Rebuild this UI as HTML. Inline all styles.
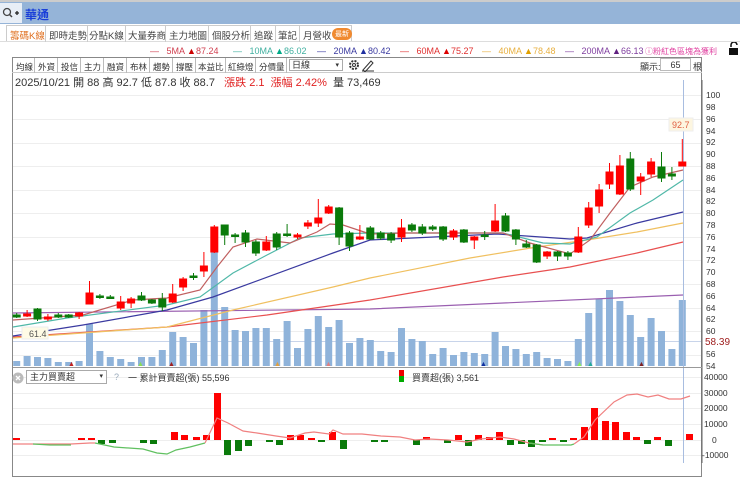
<!DOCTYPE html><html><head><meta charset="utf-8"><style>
*{margin:0;padding:0;box-sizing:border-box}
body{width:740px;height:463px;overflow:hidden;background:#fff;font-family:"Liberation Sans","Noto Sans CJK TC",sans-serif;position:relative;font-size:10px;color:#333}
.a{position:absolute;white-space:nowrap}
</style></head><body>
<div class="a" style="left:0;top:0;width:740px;height:2px;background:#ccc"></div>
<div class="a" style="left:0;top:2px;width:740px;height:22px;background:#95b4d8"></div>
<div class="a" style="left:0;top:3px;width:22px;height:20px;background:#e8eef6"></div>
<svg class="a" style="left:2px;top:7px" width="18" height="12"><circle cx="5" cy="5" r="3.5" fill="none" stroke="#444" stroke-width="1.3"/><line x1="7.5" y1="7.5" x2="10" y2="10" stroke="#444" stroke-width="1.5"/><path d="M13 6h4M15 4v4" stroke="#222" stroke-width="1.3"/></svg>
<div class="a" style="left:25px;top:6px;font-size:12px;font-weight:bold;color:#1a3fd8">華通</div>
<div class="a" style="left:0;top:24px;width:740px;height:18px;background:#fff;border-bottom:1px solid #ddd"></div>
<div class="a" style="left:6px;top:25px;width:346px;height:16px;border:1px solid #ccc;border-bottom:none"></div>
<div class="a" style="top:28px;font-size:9.5px;left:0;color:#444">
<span class="a" style="left:10px;color:#e07020">籌碼K線</span>
<span class="a" style="left:49px">即時走勢</span><span class="a" style="left:89px">分點K線</span><span class="a" style="left:128px">大量券商</span><span class="a" style="left:169px">主力地圖</span><span class="a" style="left:212px">個股分析</span><span class="a" style="left:254px">追蹤</span><span class="a" style="left:278px">筆記</span><span class="a" style="left:303px">月營收</span>
<span class="a" style="left:332px;top:0;background:#f08a30;color:#fff;border-radius:6px;font-size:7px;padding:1px 3px">最新</span></div>
<svg class="a" style="left:0;top:25px" width="360" height="17"><g stroke="#ccc"><line x1="45.5" y1="0" x2="45.5" y2="17"/><line x1="87.5" y1="0" x2="87.5" y2="17"/><line x1="125.5" y1="0" x2="125.5" y2="17"/><line x1="165.5" y1="0" x2="165.5" y2="17"/><line x1="208.5" y1="0" x2="208.5" y2="17"/><line x1="250.5" y1="0" x2="250.5" y2="17"/><line x1="275.5" y1="0" x2="275.5" y2="17"/><line x1="299.5" y1="0" x2="299.5" y2="17"/></g></svg>
<div class="a" style="top:46px;left:0;font-size:9px">
<span class="a" style="left:150px;color:#d04050">—&nbsp;&nbsp;&nbsp;5MA <span style="color:#c00">▲</span>87.24</span>
<span class="a" style="left:233px;color:#40b0a0">—&nbsp;&nbsp;&nbsp;10MA <span style="color:#0a8">▲</span>86.02</span>
<span class="a" style="left:317px;color:#3a3aa0">—&nbsp;&nbsp;&nbsp;20MA <span style="color:#2030a0">▲</span>80.42</span>
<span class="a" style="left:400px;color:#e03030">—&nbsp;&nbsp;&nbsp;60MA <span style="color:#d00">▲</span>75.27</span>
<span class="a" style="left:482px;color:#e8b040">—&nbsp;&nbsp;&nbsp;40MA <span style="color:#e0a000">▲</span>78.48</span>
<span class="a" style="left:565px;color:#8040a0">—&nbsp;&nbsp;&nbsp;200MA <span style="color:#602080">▲</span>66.13</span>
<span class="a" style="left:645px;color:#e040a0;font-size:8px">ⓘ粉紅色區塊為獲利</span></div>
<svg class="a" style="left:728px;top:42px" width="12" height="14"><path d="M3 5V3a3 3 0 0 1 6 0" fill="none" stroke="#111" stroke-width="1.5"/><rect x="1" y="6" width="9" height="7" fill="#111"/></svg>
<div class="a" style="left:12px;top:57px;width:690px;height:420px;border:1px solid #888"></div>
<div class="a" style="left:12px;top:57px;width:690px;height:16px;border-bottom:1px solid #ccc"></div>
<div class="a" style="left:0;top:61px;font-size:8.5px;color:#333">
<span class="a" style="left:16px">均線</span><span class="a" style="left:38px">外資</span><span class="a" style="left:61px">投信</span><span class="a" style="left:84px">主力</span><span class="a" style="left:107px">融資</span><span class="a" style="left:130px">布林</span><span class="a" style="left:153px">趨勢</span><span class="a" style="left:176px">撐壓</span><span class="a" style="left:198px">本益比</span><span class="a" style="left:228px">紅綠燈</span><span class="a" style="left:259px">分價量</span></div>
<svg class="a" style="left:13px;top:58px" width="290" height="15"><g stroke="#bbb"><line x1="21.5" y1="0" x2="21.5" y2="15"/><line x1="44.5" y1="0" x2="44.5" y2="15"/><line x1="67.5" y1="0" x2="67.5" y2="15"/><line x1="90.5" y1="0" x2="90.5" y2="15"/><line x1="113.5" y1="0" x2="113.5" y2="15"/><line x1="136.5" y1="0" x2="136.5" y2="15"/><line x1="159.5" y1="0" x2="159.5" y2="15"/><line x1="182.5" y1="0" x2="182.5" y2="15"/><line x1="212.5" y1="0" x2="212.5" y2="15"/><line x1="242.5" y1="0" x2="242.5" y2="15"/><line x1="273.5" y1="0" x2="273.5" y2="15"/></g></svg>
<div class="a" style="left:289px;top:59px;width:54px;height:12px;border:1px solid #aaa;font-size:9px;padding-left:2px;line-height:11px">日線<span style="position:absolute;right:3px;font-size:7px">▾</span></div>
<svg class="a" style="left:347px;top:58px" width="30" height="14"><circle cx="7" cy="7" r="4" fill="none" stroke="#333" stroke-width="2" stroke-dasharray="2 1.2"/><circle cx="7" cy="7" r="1.5" fill="none" stroke="#333"/><path d="M16 12l8-9 2 2-8 9z" fill="none" stroke="#333"/><line x1="15" y1="13" x2="27" y2="13" stroke="#333"/></svg>
<div class="a" style="left:640px;top:60px;font-size:9px">顯示:</div>
<div class="a" style="left:660px;top:58px;width:31px;height:13px;border:1px solid #bbb;font-size:9px;text-align:center;line-height:12px">65</div>
<div class="a" style="left:693px;top:60px;font-size:9px">根</div>
<div class="a" style="left:15px;top:74px;font-size:11px;color:#333">2025/10/21 開 88 高 92.7 低 87.8 收 88.7 &nbsp;&nbsp;<span style="color:#e02020">漲跌 2.1 &nbsp;漲幅 2.42%</span> &nbsp;量 73,469</div>
<svg class="a" style="left:0;top:0" width="740" height="463">
<g stroke="#eee" stroke-width="1">
<line x1="13" y1="95.5" x2="701" y2="95.5"/><line x1="13" y1="119.5" x2="701" y2="119.5"/><line x1="13" y1="143.5" x2="701" y2="143.5"/><line x1="13" y1="166.5" x2="701" y2="166.5"/><line x1="13" y1="190.5" x2="701" y2="190.5"/><line x1="13" y1="213.5" x2="701" y2="213.5"/><line x1="13" y1="237.5" x2="701" y2="237.5"/><line x1="13" y1="260.5" x2="701" y2="260.5"/><line x1="13" y1="284.5" x2="701" y2="284.5"/><line x1="13" y1="308.5" x2="701" y2="308.5"/><line x1="13" y1="331.5" x2="701" y2="331.5"/><line x1="13" y1="355.5" x2="701" y2="355.5"/>
<line x1="13" y1="377.5" x2="701" y2="377.5"/><line x1="13" y1="393.5" x2="701" y2="393.5"/><line x1="13" y1="408.5" x2="701" y2="408.5"/><line x1="13" y1="424.5" x2="701" y2="424.5"/><line x1="13" y1="440.5" x2="701" y2="440.5"/><line x1="13" y1="455.5" x2="701" y2="455.5"/>
</g>
<line x1="13" y1="341.5" x2="701" y2="341.5" stroke="#c8d4ea"/>
<g fill="#8fb3da">
<rect x="13.2" y="361" width="7" height="5"/><rect x="23.6" y="356" width="7" height="10"/><rect x="34" y="357" width="7" height="9"/><rect x="44.4" y="358" width="7" height="8"/><rect x="54.8" y="362" width="7" height="4"/><rect x="65.2" y="362" width="7" height="4"/><rect x="75.6" y="361" width="7" height="5"/><rect x="86" y="324" width="7" height="42"/><rect x="96.4" y="351" width="7" height="15"/><rect x="106.8" y="357" width="7" height="9"/><rect x="117.2" y="359" width="7" height="7"/><rect x="127.6" y="362" width="7" height="4"/><rect x="138" y="357" width="7" height="9"/><rect x="148.4" y="357" width="7" height="9"/><rect x="158.8" y="350" width="7" height="16"/><rect x="169.2" y="332" width="7" height="34"/><rect x="179.6" y="337" width="7" height="29"/><rect x="190" y="343" width="7" height="23"/><rect x="200.4" y="310" width="7" height="56"/><rect x="210.8" y="252" width="7" height="114"/><rect x="221.2" y="307" width="7" height="59"/><rect x="231.6" y="330" width="7" height="36"/><rect x="242" y="331" width="7" height="35"/><rect x="252.4" y="328" width="7" height="38"/><rect x="262.8" y="328" width="7" height="38"/><rect x="273.2" y="339" width="7" height="27"/><rect x="283.6" y="321" width="7" height="45"/><rect x="294" y="348" width="7" height="18"/><rect x="304.4" y="329" width="7" height="37"/><rect x="314.8" y="316" width="7" height="50"/><rect x="325.2" y="327" width="7" height="39"/><rect x="335.6" y="320" width="7" height="46"/><rect x="346" y="343" width="7" height="23"/><rect x="356.4" y="338" width="7" height="28"/><rect x="366.8" y="340" width="7" height="26"/><rect x="377.2" y="351" width="7" height="15"/><rect x="387.6" y="352" width="7" height="14"/><rect x="398" y="328" width="7" height="38"/><rect x="408.4" y="339" width="7" height="27"/><rect x="418.8" y="341" width="7" height="25"/><rect x="429.2" y="354" width="7" height="12"/><rect x="439.6" y="348" width="7" height="18"/><rect x="450" y="355" width="7" height="11"/><rect x="460.4" y="352" width="7" height="14"/><rect x="470.8" y="353" width="7" height="13"/><rect x="481.2" y="354" width="7" height="12"/><rect x="491.6" y="332" width="7" height="34"/><rect x="502" y="346" width="7" height="20"/><rect x="512.4" y="349" width="7" height="17"/><rect x="522.8" y="354" width="7" height="12"/><rect x="533.2" y="352" width="7" height="14"/><rect x="543.6" y="358" width="7" height="8"/><rect x="554" y="359" width="7" height="7"/><rect x="564.4" y="361" width="7" height="5"/><rect x="574.8" y="339" width="7" height="27"/><rect x="585.2" y="313" width="7" height="53"/><rect x="595.6" y="299" width="7" height="67"/><rect x="606" y="290" width="7" height="76"/><rect x="616.4" y="301" width="7" height="65"/><rect x="626.8" y="315" width="7" height="51"/><rect x="637.2" y="337" width="7" height="29"/><rect x="647.6" y="318" width="7" height="48"/><rect x="658" y="331" width="7" height="35"/><rect x="668.4" y="349" width="7" height="17"/><rect x="678.8" y="300" width="7" height="66"/>
</g>
<g font-size="7"><text x="68" y="366" fill="#c02020">▲</text><text x="137" y="366" fill="#8d5">▲</text><text x="168" y="366" fill="#a02020">▲</text><text x="274" y="366" fill="#e0a040">▲</text><text x="325" y="366" fill="#e08080">▲</text><text x="480" y="366" fill="#1030a0">▲</text><text x="576" y="366" fill="#8e5">▲</text><text x="587" y="366" fill="#2a9">▲</text><text x="638" y="366" fill="#802020">▲</text></g>
<line x1="683.5" y1="80" x2="683.5" y2="463" stroke="#a8bde0"/>
<g fill="none" stroke-width="1.2">
<polyline stroke="#9a5fb0" points="13,313 370,309 683,295"/>
<polyline stroke="#e85050" points="13,337 167,327 267,315 370,300 503,277 570,267 637,253 683,242"/>
<polyline stroke="#f0c060" points="13,338 167,327 233,310 333,287 370,278 470,258 537,247 587,240 637,232 683,223"/>
<polyline stroke="#3a3aa0" points="13,336 83,325 167,310 213,297 333,253 370,240 497,234 570,239 587,238 637,223 683,212"/>
<polyline stroke="#50b8a8" points="13,327 67,318 167,305 200,297 233,273 267,255 300,238 333,234 370,233 437,233 503,233 543,243 570,244 597,237 630,213 653,200 683,180"/>
<polyline stroke="#c06060" points="13,320 83,315 133,300 167,298 200,290 217,267 233,247 257,239 290,243 317,232 330,224 343,225 370,234 403,233 470,233 503,233 530,243 570,254 590,240 610,213 630,187 653,177 683,170"/>
</g>
<g stroke-width="1">
<g stroke="#0a7a0a" fill="#0a7a0a">
<line x1="16.7" y1="313" x2="16.7" y2="318"/><rect x="13.2" y="315" width="7" height="2"/>
<line x1="37.5" y1="308" x2="37.5" y2="321"/><rect x="34" y="309" width="7" height="10"/>
<line x1="58.3" y1="313" x2="58.3" y2="318"/><rect x="54.8" y="315" width="7" height="2"/>
<line x1="68.7" y1="314" x2="68.7" y2="318"/><rect x="65.2" y="315" width="7" height="2"/>
<line x1="99.9" y1="294" x2="99.9" y2="299"/><rect x="96.4" y="296" width="7" height="1.5"/>
<line x1="110.3" y1="295" x2="110.3" y2="299"/><rect x="106.8" y="297" width="7" height="1.5"/>
<line x1="141.5" y1="292" x2="141.5" y2="301"/><rect x="138" y="296" width="7" height="4"/>
<line x1="151.9" y1="299" x2="151.9" y2="304"/><rect x="148.4" y="300" width="7" height="3"/>
<line x1="162.3" y1="293" x2="162.3" y2="311"/><rect x="158.8" y="299" width="7" height="8"/>
<line x1="193.5" y1="273" x2="193.5" y2="280"/><rect x="190" y="276" width="7" height="1.5"/>
<line x1="224.7" y1="225" x2="224.7" y2="245"/><rect x="221.2" y="225" width="7" height="10"/>
<line x1="235.1" y1="233" x2="235.1" y2="243"/><rect x="231.6" y="235" width="7" height="1.5"/>
<line x1="245.5" y1="230" x2="245.5" y2="247"/><rect x="242" y="233" width="7" height="9"/>
<line x1="255.9" y1="240" x2="255.9" y2="256"/><rect x="252.4" y="242" width="7" height="11"/>
<line x1="276.7" y1="232" x2="276.7" y2="250"/><rect x="273.2" y="234" width="7" height="13"/>
<line x1="287.1" y1="224" x2="287.1" y2="237"/><rect x="283.6" y="234" width="7" height="1.5"/>
<line x1="339.1" y1="207" x2="339.1" y2="245"/><rect x="335.6" y="208" width="7" height="29"/>
<line x1="349.5" y1="231" x2="349.5" y2="251"/><rect x="346" y="233" width="7" height="13"/>
<line x1="370.3" y1="226" x2="370.3" y2="240"/><rect x="366.8" y="228" width="7" height="11"/>
<line x1="380.7" y1="231" x2="380.7" y2="240"/><rect x="377.2" y="233" width="7" height="5"/>
<line x1="391.1" y1="232" x2="391.1" y2="243"/><rect x="387.6" y="234" width="7" height="6"/>
<line x1="411.9" y1="223" x2="411.9" y2="232"/><rect x="408.4" y="225" width="7" height="5"/>
<line x1="422.3" y1="224" x2="422.3" y2="235"/><rect x="418.8" y="227" width="7" height="6"/>
<line x1="432.7" y1="225" x2="432.7" y2="231"/><rect x="429.2" y="227" width="7" height="2"/>
<line x1="443.1" y1="226" x2="443.1" y2="241"/><rect x="439.6" y="227" width="7" height="12"/>
<line x1="463.9" y1="229" x2="463.9" y2="243"/><rect x="460.4" y="230" width="7" height="12"/>
<line x1="484.7" y1="231" x2="484.7" y2="240"/><rect x="481.2" y="235" width="7" height="1.5"/>
<line x1="505.5" y1="213" x2="505.5" y2="232"/><rect x="502" y="216" width="7" height="15"/>
<line x1="515.9" y1="229" x2="515.9" y2="245"/><rect x="512.4" y="230" width="7" height="9"/>
<line x1="526.3" y1="240" x2="526.3" y2="248"/><rect x="522.8" y="244" width="7" height="3"/>
<line x1="536.7" y1="244" x2="536.7" y2="263"/><rect x="533.2" y="245" width="7" height="17"/>
<line x1="557.5" y1="251" x2="557.5" y2="261"/><rect x="554" y="252" width="7" height="4"/>
<line x1="567.9" y1="251" x2="567.9" y2="260"/><rect x="564.4" y="253" width="7" height="3"/>
<line x1="630.3" y1="152" x2="630.3" y2="191"/><rect x="626.8" y="159" width="7" height="30"/>
<line x1="661.5" y1="152" x2="661.5" y2="182"/><rect x="658" y="167" width="7" height="11"/>
<line x1="671.9" y1="167" x2="671.9" y2="180"/><rect x="668.4" y="174" width="7" height="2"/>
</g>
<g stroke="#f00" fill="#f00">
<line x1="27.1" y1="310" x2="27.1" y2="317"/><rect x="23.6" y="314" width="7" height="2"/>
<line x1="47.9" y1="314" x2="47.9" y2="321"/><rect x="44.4" y="317" width="7" height="2"/>
<line x1="79.1" y1="312" x2="79.1" y2="319"/><rect x="75.6" y="313" width="7" height="3"/>
<line x1="89.5" y1="281" x2="89.5" y2="304"/><rect x="86" y="293" width="7" height="11"/>
<line x1="120.7" y1="296" x2="120.7" y2="310"/><rect x="117.2" y="302" width="7" height="6"/>
<line x1="131.1" y1="297" x2="131.1" y2="308"/><rect x="127.6" y="299" width="7" height="4"/>
<line x1="172.7" y1="284" x2="172.7" y2="303"/><rect x="169.2" y="294" width="7" height="8"/>
<line x1="183.1" y1="277" x2="183.1" y2="291"/><rect x="179.6" y="279" width="7" height="8"/>
<line x1="203.9" y1="252" x2="203.9" y2="277"/><rect x="200.4" y="266" width="7" height="5"/>
<line x1="214.3" y1="225" x2="214.3" y2="253"/><rect x="210.8" y="227" width="7" height="25"/>
<line x1="266.3" y1="236" x2="266.3" y2="251"/><rect x="262.8" y="242" width="7" height="8"/>
<line x1="297.5" y1="233" x2="297.5" y2="239"/><rect x="294" y="235" width="7" height="2"/>
<line x1="307.9" y1="220" x2="307.9" y2="229"/><rect x="304.4" y="223" width="7" height="3"/>
<line x1="318.3" y1="199" x2="318.3" y2="227"/><rect x="314.8" y="218" width="7" height="5"/>
<line x1="328.7" y1="205" x2="328.7" y2="214"/><rect x="325.2" y="207" width="7" height="6"/>
<line x1="359.9" y1="225" x2="359.9" y2="240"/><rect x="356.4" y="237" width="7" height="2"/>
<line x1="401.5" y1="219" x2="401.5" y2="242"/><rect x="398" y="228" width="7" height="9"/>
<line x1="453.5" y1="229" x2="453.5" y2="240"/><rect x="450" y="231" width="7" height="6"/>
<line x1="474.3" y1="236" x2="474.3" y2="249"/><rect x="470.8" y="237" width="7" height="3"/>
<line x1="495.1" y1="204" x2="495.1" y2="232"/><rect x="491.6" y="221" width="7" height="10"/>
<line x1="547.1" y1="251" x2="547.1" y2="259"/><rect x="543.6" y="252" width="7" height="4"/>
<line x1="578.3" y1="227" x2="578.3" y2="253"/><rect x="574.8" y="237" width="7" height="15"/>
<line x1="588.7" y1="202" x2="588.7" y2="228"/><rect x="585.2" y="208" width="7" height="17"/>
<line x1="599.1" y1="184" x2="599.1" y2="213"/><rect x="595.6" y="190" width="7" height="16"/>
<line x1="609.5" y1="163" x2="609.5" y2="189"/><rect x="606" y="172" width="7" height="12"/>
<line x1="619.9" y1="155" x2="619.9" y2="195"/><rect x="616.4" y="166" width="7" height="28"/>
<line x1="640.7" y1="173" x2="640.7" y2="195"/><rect x="637.2" y="177" width="7" height="4"/>
<line x1="651.1" y1="158" x2="651.1" y2="177"/><rect x="647.6" y="162" width="7" height="12"/>
<line x1="682.3" y1="139" x2="682.3" y2="166"/><rect x="678.8" y="162" width="7" height="4"/>
</g></g>
<rect x="669" y="118" width="24" height="13" fill="#fdf6e0" stroke="#eee"/><text x="672" y="128" font-size="9" fill="#e06040">92.7</text>
<rect x="22" y="327" width="26" height="12" fill="#fffbe6" stroke="#eee"/><text x="29" y="337" font-size="9" fill="#555">61.4</text>
<line x1="702" y1="80" x2="702" y2="463" stroke="#666"/>
<g font-size="8.5" fill="#333">
<text x="706" y="98">100</text><text x="706" y="110">98</text><text x="706" y="122">96</text><text x="706" y="134">94</text><text x="706" y="145">92</text><text x="706" y="157">90</text><text x="706" y="169">88</text><text x="706" y="181">86</text><text x="706" y="193">84</text><text x="706" y="204">82</text><text x="706" y="216">80</text><text x="706" y="228">78</text><text x="706" y="240">76</text><text x="706" y="252">74</text><text x="706" y="263">72</text><text x="706" y="275">70</text><text x="706" y="287">68</text><text x="706" y="299">66</text><text x="706" y="311">64</text><text x="706" y="322">62</text><text x="706" y="334">60</text><text x="706" y="357">56</text><text x="706" y="369">54</text>
<text x="705" y="345" font-size="10" fill="#a02020">58.39</text>
<text x="704" y="380">40000</text><text x="704" y="396">30000</text><text x="704" y="411">20000</text><text x="704" y="427">10000</text><text x="712" y="443">0</text><text x="702" y="458">-10000</text></g>
<line x1="13" y1="367.5" x2="702" y2="367.5" stroke="#999"/>
<g fill="#f00">
<rect x="13" y="438" width="7" height="2"/><rect x="78" y="438" width="7" height="2"/><rect x="88" y="438" width="7" height="2"/>
<rect x="171" y="432" width="7" height="8"/><rect x="181" y="435" width="7" height="5"/><rect x="193" y="437" width="7" height="3"/><rect x="203" y="435" width="7" height="5"/><rect x="214" y="393" width="7" height="47"/>
<rect x="287" y="435" width="7" height="5"/><rect x="297" y="435" width="7" height="5"/><rect x="308" y="438" width="7" height="2"/><rect x="329" y="432" width="7" height="8"/>
<rect x="423" y="437" width="7" height="3"/><rect x="455" y="435" width="7" height="5"/><rect x="475" y="435" width="7" height="5"/><rect x="486" y="437" width="7" height="3"/><rect x="496" y="432" width="7" height="8"/>
<rect x="549" y="438" width="7" height="2"/><rect x="570" y="438" width="7" height="2"/><rect x="581" y="427" width="7" height="13"/><rect x="591" y="408" width="7" height="32"/><rect x="602" y="421" width="7" height="19"/><rect x="612" y="422" width="7" height="18"/><rect x="623" y="432" width="7" height="8"/><rect x="633" y="437" width="7" height="3"/><rect x="654" y="437" width="7" height="3"/><rect x="686" y="434" width="7" height="6"/>
</g>
<g fill="#0a7a0a">
<rect x="98" y="440" width="7" height="4"/><rect x="109" y="440" width="7" height="3"/><rect x="140" y="440" width="7" height="3"/><rect x="150" y="440" width="7" height="4"/>
<rect x="224" y="440" width="7" height="15"/><rect x="235" y="440" width="7" height="11"/><rect x="245" y="440" width="7" height="6"/><rect x="266" y="440" width="7" height="2"/><rect x="276" y="440" width="7" height="5"/><rect x="318" y="440" width="7" height="2"/><rect x="340" y="440" width="7" height="9"/>
<rect x="371" y="440" width="7" height="2"/><rect x="381" y="440" width="7" height="2"/><rect x="413" y="440" width="7" height="5"/><rect x="444" y="440" width="7" height="3"/><rect x="465" y="440" width="7" height="6"/><rect x="507" y="440" width="7" height="5"/><rect x="518" y="440" width="7" height="4"/><rect x="528" y="440" width="7" height="7"/><rect x="539" y="440" width="7" height="2"/><rect x="560" y="440" width="7" height="2"/><rect x="644" y="440" width="7" height="4"/><rect x="665" y="440" width="7" height="6"/>
</g>
<g fill="none" stroke-width="1.2">
<polyline stroke="#f08080" points="13,444 33,444 71,444 90,443 95,443"/>
<polyline stroke="#60c060" points="33,444 50,445 71,445"/>
<polyline stroke="#60c060" points="95,443 114,447 143,449 157,453 167,454 176,450 190,447 205,443"/>
<polyline stroke="#f08080" points="205,443 217,418 228,423 243,431 257,433 276,436 290,438 305,433 314,432 329,434 333,430 343,434 362,434 381,436 400,437 415,440 429,439 448,440 467,442 481,439 500,437 514,439 529,443 543,445"/>
<polyline stroke="#60c060" points="529,443 543,445 571,445 574,444"/>
<polyline stroke="#f08080" points="574,444 584,437 595,420 614,402 627,395 637,394 648,397 658,395 669,399 681,399 690,396"/>
</g>
</svg>
<div class="a" style="left:0;top:366px;width:12px;height:97px;background:#fff"></div>
<svg class="a" style="left:11px;top:371px" width="14" height="14"><circle cx="7" cy="7" r="5.5" fill="#bbb"/><path d="M5 5l4 4M9 5l-4 4" stroke="#fff" stroke-width="1.3"/></svg>
<div class="a" style="left:26px;top:370px;width:81px;height:14px;border:1px solid #aaa;background:#fff;font-size:9px;line-height:12px;padding-left:3px">主力買賣超<span style="position:absolute;right:3px;font-size:7px">▾</span></div>
<div class="a" style="left:114px;top:372px;font-size:9px;color:#9ab">?</div>
<div class="a" style="left:128px;top:371px;font-size:9px;color:#333">一 累計買賣超(張) 55,596</div>
<div class="a" style="left:399px;top:370px;width:5px;height:6px;background:#e00"></div><div class="a" style="left:399px;top:376px;width:5px;height:6px;background:#0a0"></div>
<div class="a" style="left:412px;top:371px;font-size:9px;color:#333">買賣超(張) 3,561</div>
</body></html>
